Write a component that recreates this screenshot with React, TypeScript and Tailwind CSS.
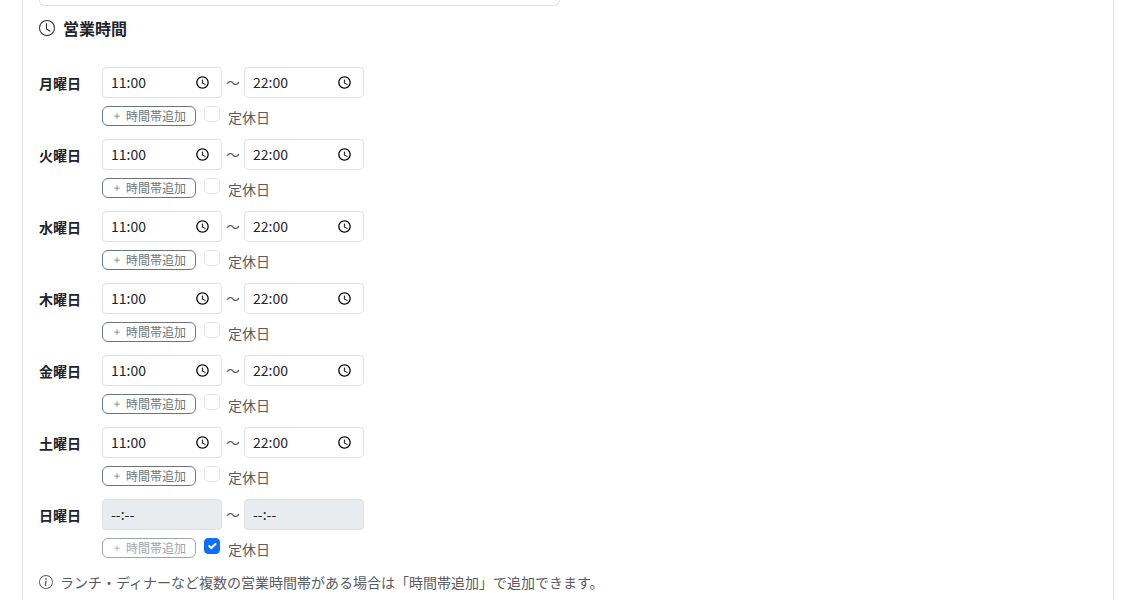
import { useState } from "react";

type Day = { label: string; open: string; close: string; closed: boolean };

const initialDays: Day[] = ["月曜日", "火曜日", "水曜日", "木曜日", "金曜日", "土曜日", "日曜日"].map((label, i) => ({
  label,
  open: i === 6 ? "" : "11:00",
  close: i === 6 ? "" : "22:00",
  closed: i === 6,
}));

function ClockIcon() {
  return (
    <svg className="size-4" viewBox="0 0 16 16" fill="currentColor" aria-hidden="true">
      <path d="M8 3.5a.5.5 0 0 0-1 0V9a.5.5 0 0 0 .252.434l3.5 2a.5.5 0 0 0 .496-.868L8 8.71z" />
      <path d="M8 16A8 8 0 1 0 8 0a8 8 0 0 0 0 16m7-8A7 7 0 1 1 1 8a7 7 0 0 1 14 0" />
    </svg>
  );
}

function InfoIcon() {
  return (
    <svg className="size-3.5" viewBox="0 0 16 16" fill="currentColor" aria-hidden="true">
      <path d="M8 15A7 7 0 1 1 8 1a7 7 0 0 1 0 14m0 1A8 8 0 1 0 8 0a8 8 0 0 0 0 16" />
      <path d="m8.93 6.588-2.29.287-.082.38.45.083c.294.07.352.176.288.469l-.738 3.468c-.194.897.105 1.319.808 1.319.545 0 1.178-.252 1.465-.598l.088-.416c-.2.176-.492.246-.686.246-.275 0-.375-.193-.304-.533zM9 4.5a1 1 0 1 1-2 0 1 1 0 0 1 2 0" />
    </svg>
  );
}

function PlusIcon() {
  return (
    <svg className="size-3" viewBox="0 0 16 16" fill="currentColor" aria-hidden="true">
      <path d="M8 4a.5.5 0 0 1 .5.5v3h3a.5.5 0 0 1 0 1h-3v3a.5.5 0 0 1-1 0v-3h-3a.5.5 0 0 1 0-1h3v-3A.5.5 0 0 1 8 4" />
    </svg>
  );
}

function PickerIcon() {
  return (
    <svg className="size-[15px]" viewBox="0 0 24 24" fill="#000" aria-hidden="true">
      <path d="M11.99 2C6.47 2 2 6.48 2 12s4.47 10 9.99 10C17.52 22 22 17.52 22 12S17.52 2 11.99 2zM12 20c-4.42 0-8-3.58-8-8s3.58-8 8-8 8 3.58 8 8-3.58 8-8 8z" />
      <path d="M12.5 7H11v6l5.25 3.15.75-1.23-4.5-2.67z" />
    </svg>
  );
}

function TimeField({ label, value, disabled, onChange }: { label: string; value: string; disabled: boolean; onChange: (v: string) => void }) {
  return (
    <div
      className={
        disabled
          ? "flex h-[31px] w-[120px] items-center rounded border border-[#dee2e6] bg-[#e9ecef] pr-[11px] pl-2"
          : "flex h-[31px] w-[120px] items-center rounded border border-[#dee2e6] bg-white pr-[11px] pl-2"
      }
    >
      <input
        type="text"
        inputMode="numeric"
        aria-label={label}
        placeholder="--:--"
        value={value}
        disabled={disabled}
        onChange={(e) => onChange(e.target.value)}
        className="w-full min-w-0 flex-1 bg-transparent pb-px text-sm leading-5 text-[#212529] outline-none placeholder:text-[#212529]"
      />
      {!disabled && (
        <button type="button" aria-label={label + "を選択"}>
          <PickerIcon />
        </button>
      )}
    </div>
  );
}

export default function App() {
  const [days, setDays] = useState(initialDays);
  const update = (i: number, patch: Partial<Day>) => setDays(days.map((d, j) => (j === i ? { ...d, ...patch } : d)));

  return (
    <main className="bg-white pr-3.5 pl-[22px] font-['Noto_Sans_CJK_JP','Noto_Sans',sans-serif] text-[#212529]">
      <section className="min-h-screen border-x border-[#dee2e6] px-4">
        <div className="h-1.5 w-[521px] max-w-full rounded-b-md border-x border-b border-[#dee2e6]" />
        <h2 className="mt-3 flex items-center gap-2 text-base leading-5 font-bold">
          <ClockIcon />
          営業時間
        </h2>
        <div className="mt-[29px] flex flex-col gap-3">
          {days.map((day, i) => (
            <div key={day.label} className="flex h-[60px] items-start">
              <div className="w-[63px] pt-[6px] text-sm leading-5 font-bold">{day.label}</div>
              <div>
                <div className="flex items-center">
                  <TimeField label={day.label + " 開店"} value={day.open} disabled={day.closed} onChange={(open) => update(i, { open })} />
                  <span className="w-[22px] pb-px text-center text-sm leading-5 text-[#585b5e]">～</span>
                  <TimeField label={day.label + " 閉店"} value={day.close} disabled={day.closed} onChange={(close) => update(i, { close })} />
                </div>
                <div className="mt-2 flex items-start">
                  <button
                    type="button"
                    disabled={day.closed}
                    className="flex h-5 w-[94px] items-center gap-[3px] rounded-md border border-[#6c757d] pl-2 text-xs leading-[18px] text-[#6c757d] disabled:opacity-65"
                  >
                    <PlusIcon />
                    時間帯追加
                  </button>
                  <label className="ml-2 flex items-start gap-2 text-sm text-[#585b5e]">
                    <span className="grid">
                      <input
                        type="checkbox"
                        checked={day.closed}
                        onChange={(e) => update(i, { closed: e.target.checked })}
                        className="peer col-start-1 row-start-1 size-4 appearance-none rounded border border-[#dee2e6] checked:border-[#0d6efd] checked:bg-[#0d6efd]"
                      />
                      <svg className="invisible col-start-1 row-start-1 m-px size-3.5 peer-checked:visible" viewBox="0 0 20 20" fill="none" stroke="#fff" strokeWidth="3" strokeLinecap="round" strokeLinejoin="round" aria-hidden="true">
                        <path d="m6 10 3 3 6-6" />
                      </svg>
                    </span>
                    <span className="pt-px leading-5">定休日</span>
                  </label>
                </div>
              </div>
            </div>
          ))}
        </div>
        <p className="mt-3 flex items-center gap-[7px] text-sm leading-[22px] text-[#585b5e]">
          <InfoIcon />
          ランチ・ディナーなど複数の営業時間帯がある場合は「時間帯追加」で追加できます。
        </p>
      </section>
    </main>
  );
}
